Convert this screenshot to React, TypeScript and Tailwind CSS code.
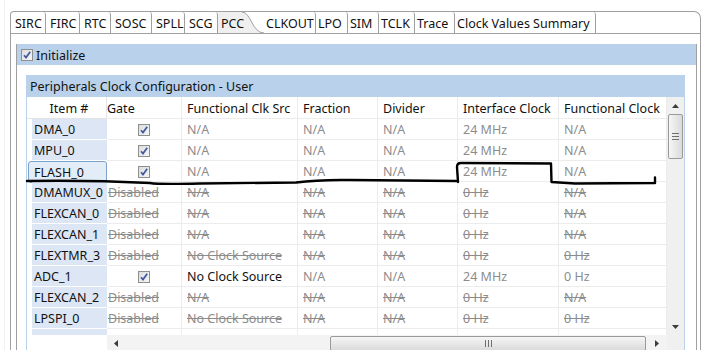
import React from 'react';

type Row = {
  item: string;
  on: boolean;
  src: string;
  frac: string;
  div: string;
  iface: string;
  func: string;
  srcDark?: boolean;
  selected?: boolean;
};

const rows: Row[] = [
  { item: 'DMA_0', on: true, src: 'N/A', frac: 'N/A', div: 'N/A', iface: '24 MHz', func: 'N/A' },
  { item: 'MPU_0', on: true, src: 'N/A', frac: 'N/A', div: 'N/A', iface: '24 MHz', func: 'N/A' },
  { item: 'FLASH_0', on: true, src: 'N/A', frac: 'N/A', div: 'N/A', iface: '24 MHz', func: 'N/A', selected: true },
  { item: 'DMAMUX_0', on: false, src: 'N/A', frac: 'N/A', div: 'N/A', iface: '0 Hz', func: 'N/A' },
  { item: 'FLEXCAN_0', on: false, src: 'N/A', frac: 'N/A', div: 'N/A', iface: '0 Hz', func: 'N/A' },
  { item: 'FLEXCAN_1', on: false, src: 'N/A', frac: 'N/A', div: 'N/A', iface: '0 Hz', func: 'N/A' },
  { item: 'FLEXTMR_3', on: false, src: 'No Clock Source', frac: 'N/A', div: 'N/A', iface: '0 Hz', func: '0 Hz' },
  { item: 'ADC_1', on: true, src: 'No Clock Source', frac: 'N/A', div: 'N/A', iface: '24 MHz', func: '0 Hz', srcDark: true },
  { item: 'FLEXCAN_2', on: false, src: 'N/A', frac: 'N/A', div: 'N/A', iface: '0 Hz', func: 'N/A' },
  { item: 'LPSPI_0', on: false, src: 'No Clock Source', frac: 'N/A', div: 'N/A', iface: '0 Hz', func: '0 Hz' },
];

const tabs = [
  { name: 'SIRC', w: 'w-[35px]' },
  { name: 'FIRC', w: 'w-[34px]' },
  { name: 'RTC', w: 'w-[31px]' },
  { name: 'SOSC', w: 'w-[41px]' },
  { name: 'SPLL', w: 'w-[33px]' },
  { name: 'SCG', w: 'w-[33px]' },
];

const tabsAfter = [
  { name: 'CLKOUT', w: 'w-[52px]' },
  { name: 'LPO', w: 'w-[32px]' },
  { name: 'SIM', w: 'w-[31px]' },
  { name: 'TCLK', w: 'w-[36px]' },
  { name: 'Trace', w: 'w-[40px]' },
  { name: 'Clock Values Summary', w: 'w-[141px]' },
];

const CheckBox = () => (
  <svg width="12" height="12" viewBox="0 0 12 12">
    <defs>
      <linearGradient id="cbg" x1="0" y1="0" x2="1" y2="1">
        <stop offset="0" stopColor="#dcdcdc" />
        <stop offset="1" stopColor="#f6f6f6" />
      </linearGradient>
    </defs>
    <rect x="0.5" y="0.5" width="11" height="11" fill="url(#cbg)" stroke="#8e8f8f" />
    <path d="M3 6.2 L5 8.6 L9.2 2.8" fill="none" stroke="#3d5a9e" strokeWidth="1.7" />
  </svg>
);

const Dis = ({ children }: { children: React.ReactNode }) => (
  <span className="text-[#8c8c8c] line-through decoration-[#8c8c8c]">{children}</span>
);

// text sits a little below the middle of each row, as in the original
const Cell = ({ w, children, pl = 'pl-[5px]' }: { w: string; children?: React.ReactNode; pl?: string }) => (
  <div className={`${w} ${pl} pt-[3px] shrink-0 flex items-center border-r border-b border-[#ececec] whitespace-nowrap overflow-hidden`}>
    {children}
  </div>
);

const Gray = ({ on, children }: { on: boolean; children: React.ReactNode }) =>
  on ? <span className="text-[#8c8c8c]">{children}</span> : <Dis>{children}</Dis>;

const Arrow = ({ dir }: { dir: 'up' | 'down' | 'left' | 'right' }) => {
  const d = {
    up: 'M0 4 L3.5 0 L7 4 Z',
    down: 'M0 0 L7 0 L3.5 4 Z',
    left: 'M4 0 L4 7 L0 3.5 Z',
    right: 'M0 0 L4 3.5 L0 7 Z',
  }[dir];
  const vert = dir === 'up' || dir === 'down';
  return (
    <svg width={vert ? 7 : 4} height={vert ? 4 : 7} viewBox={vert ? '0 0 7 4' : '0 0 4 7'}>
      <path d={d} fill="#3c3c3c" />
    </svg>
  );
};

export default function App() {
  return (
    <div
      className="relative w-[708px] h-[350px] overflow-hidden bg-white text-[12.5px] text-[#111]"
      style={{ fontFamily: '"Noto Sans", "Liberation Sans", sans-serif' }}
    >
      <div className="flex">
        <div className="w-[5px] shrink-0 border-r border-[#f0f0f0]" />
        <div className="w-[5px] shrink-0" />
        <div className="pt-[11px]">
          {/* Tab folder */}
          <div className="w-[691px] flex flex-col border-t border-x border-[#a0a0a0] rounded-tl-[4px] rounded-tr-[7px]">
            <div className="flex shrink-0 h-[22px] border-b border-[#a0a0a0]">
              {tabs.map((t) => (
                <div key={t.name} className={`${t.w} shrink-0 pl-[4px] pt-[2px] leading-[19px] border-r border-[#a0a0a0] rounded-tr-[3px] whitespace-nowrap`}>
                  {t.name}
                </div>
              ))}
              <div className="relative w-[46px] shrink-0 pl-[3px] pt-[2px] leading-[19px] whitespace-nowrap">
                <svg className="absolute left-0 top-0" width="46" height="21" viewBox="0 0 46 21">
                  <path d="M0 0 L24 0 C33 0 34 21 46 21 L0 21 Z" fill="#efefef" />
                  <path d="M24 0 C33 0 34 21 46 21" fill="none" stroke="#a0a0a0" />
                </svg>
                <span className="relative">PCC</span>
              </div>
              {tabsAfter.map((t) => (
                <div key={t.name} className={`${t.w} shrink-0 pl-[2px] pt-[2px] leading-[19px] border-r border-[#a0a0a0] rounded-tr-[3px] whitespace-nowrap`}>
                  {t.name}
                </div>
              ))}
            </div>

            {/* Initialize section */}
            <div className="pl-[5px] pr-[3px] pt-[10px]">
              <div className="border-x border-[#a0a0a0] flex flex-col">
                <div className="h-[21px] shrink-0 bg-[#b9d1ea] flex items-center gap-[3px] pl-[4px] pt-[1px]">
                  <CheckBox />
                  <span className="pt-[2px]">Initialize</span>
                </div>

                {/* Peripherals group */}
                <div className="pl-[9px] pr-[11px] pt-[10px]">
                  <div className="border-x border-[#b9d1ea] flex flex-col">
                    <div className="h-[22px] shrink-0 bg-[#b9d1ea] pl-[3px] pt-[2px] flex items-center">
                      Peripherals Clock Configuration - User
                    </div>
                    <div className="flex shrink-0">
                      <div className="w-[640px] shrink-0 flex flex-col">
                        {/* header */}
                        <div className="flex shrink-0 h-[22px] bg-white">
                          <div className="w-[80px] shrink-0 pt-[3px] pl-[5px] flex items-center justify-center border-r border-b border-[#e3e3e3]">
                            Item #
                          </div>
                          <Cell w="w-[75px]" pl="pl-0">Gate</Cell>
                          <Cell w="w-[116px]">Functional Clk Src</Cell>
                          <Cell w="w-[80px]">Fraction</Cell>
                          <Cell w="w-[80px]">Divider</Cell>
                          <Cell w="w-[101px]">Interface Clock</Cell>
                          <Cell w="w-[108px]">Functional Clock</Cell>
                        </div>
                        {/* body */}
                        <div className="h-[216px] shrink-0 overflow-hidden">
                          {[...rows, null].map((r, i) =>
                            r ? (
                              <div key={r.item} className="flex h-[21px]">
                                {r.selected ? (
                                  <div className="w-[80px] shrink-0 pl-[1px]">
                                    <div className="h-[22px] pl-[5px] pt-[3px] flex items-center rounded-[3px] border border-[#7da2ce] bg-[#e3edf8]">
                                      {r.item}
                                    </div>
                                  </div>
                                ) : (
                                  <div className="w-[80px] shrink-0 pl-[5px]">
                                    <div className="h-[21px] pl-[2px] pt-[3px] flex items-center bg-[#dce6f4] border-b border-white whitespace-nowrap">
                                      {r.item}
                                    </div>
                                  </div>
                                )}
                                <Cell w="w-[75px]" pl="pl-[1px]">
                                  {r.on ? (
                                    <div className="w-full flex justify-center pr-[1px] -mt-[2px]">
                                      <CheckBox />
                                    </div>
                                  ) : (
                                    <Dis>Disabled</Dis>
                                  )}
                                </Cell>
                                <Cell w="w-[116px]">
                                  {r.srcDark ? <span>{r.src}</span> : <Gray on={r.on}>{r.src}</Gray>}
                                </Cell>
                                <Cell w="w-[80px]"><Gray on={r.on}>{r.frac}</Gray></Cell>
                                <Cell w="w-[80px]"><Gray on={r.on}>{r.div}</Gray></Cell>
                                <Cell w="w-[101px]"><Gray on={r.on}>{r.iface}</Gray></Cell>
                                <Cell w="w-[108px]"><Gray on={r.on}>{r.func}</Gray></Cell>
                              </div>
                            ) : (
                              <div key={'e' + i} className="flex h-[21px]">
                                <div className="w-[80px] shrink-0 pl-[5px]">
                                  <div className="h-[21px] bg-[#dce6f4]" />
                                </div>
                                <Cell w="w-[75px]" />
                                <Cell w="w-[116px]" />
                                <Cell w="w-[80px]" />
                                <Cell w="w-[80px]" />
                                <Cell w="w-[101px]" />
                                <Cell w="w-[108px]" />
                              </div>
                            )
                          )}
                        </div>
                        {/* horizontal scrollbar */}
                        <div className="flex shrink-0 h-[17px]">
                          <div className="w-[80px] shrink-0 bg-white" />
                          <div className="flex-1 flex items-center bg-[#f3f3f3]">
                            <div className="w-[17px] h-full flex items-center justify-center"><Arrow dir="left" /></div>
                            <div className="w-[206px]" />
                            <div className="w-[316px] h-[15px] rounded-[2px] border border-[#9a9a9a] bg-gradient-to-b from-[#f6f6f6] to-[#dadada] flex items-center justify-center">
                              <svg width="7" height="7" viewBox="0 0 7 7">
                                <path d="M0.5 0 V7 M3.5 0 V7 M6.5 0 V7" stroke="#6f6f6f" />
                              </svg>
                            </div>
                            <div className="flex-1 h-full flex items-center justify-center"><Arrow dir="right" /></div>
                          </div>
                        </div>
                      </div>
                      {/* vertical scrollbar */}
                      <div className="w-[17px] shrink-0 flex flex-col">
                        <div className="h-[238px] bg-[#f0f0f0] flex flex-col items-center">
                          <div className="h-[17px] w-full flex items-center justify-center"><Arrow dir="up" /></div>
                          <div className="w-[15px] h-[45px] rounded-[2px] border border-[#9a9a9a] bg-gradient-to-r from-[#f6f6f6] to-[#dadada] flex items-center justify-center">
                            <svg width="7" height="7" viewBox="0 0 7 7">
                              <path d="M0 0.5 H7 M0 3.5 H7 M0 6.5 H7" stroke="#6f6f6f" />
                            </svg>
                          </div>
                          <div className="flex-1" />
                          <div className="h-[16px] w-full flex items-center justify-center"><Arrow dir="down" /></div>
                        </div>
                        <div className="flex-1 bg-[#f0f0f0]" />
                      </div>
                    </div>
                  </div>
                </div>
              </div>
            </div>
          </div>
        </div>
      </div>

      {/* hand-drawn annotation */}
      <svg className="absolute left-0 top-0 pointer-events-none" width="708" height="350" viewBox="0 0 708 350">
        <g fill="none" stroke="#000" strokeWidth="2.4" strokeLinecap="round" strokeLinejoin="round">
          <path d="M27 181 Q 90 180 150 183 Q 158 184.5 200 183.5 L 296 182.5 Q 318 179.5 350 180 L 457 181" />
          <path d="M458 182 L 457 167 Q 457 163 461 163 L 551 163.5 L 551.5 182 L 575 183.5 L 655 183 L 655 177.5" />
        </g>
      </svg>
    </div>
  );
}
